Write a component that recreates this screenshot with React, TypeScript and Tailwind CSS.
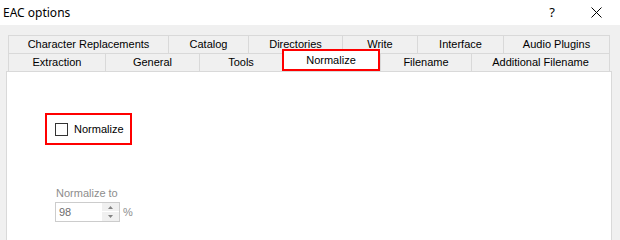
import React from "react";

const row1 = [
  { label: "Character Replacements", w: "w-[160px]" },
  { label: "Catalog", w: "w-[80px]" },
  { label: "Directories", w: "w-[94px]" },
  { label: "Write", w: "w-[75px]" },
  { label: "Interface", w: "w-[86px]" },
  { label: "Audio Plugins", w: "w-[107px]" },
];

const row2 = [
  { label: "Extraction", w: "w-[97px]" },
  { label: "General", w: "w-[94px]" },
  { label: "Tools", w: "w-[83px]" },
  { label: "Normalize", w: "w-[98px]", selected: true },
  { label: "Filename", w: "w-[91px]" },
  { label: "Additional Filename", w: "w-[139px]" },
];

function Tab({ label, w, last, selected }: { label: string; w: string; last?: boolean; selected?: boolean }) {
  if (selected) {
    return (
      <div
        className={`${w} h-[22px] -mt-[4px] relative z-10 flex items-center justify-center border-2 border-[#ff0000] bg-white text-black`}
      >
        {label}
      </div>
    );
  }
  return (
    <div
      className={`${w} h-[18px] flex items-center justify-center border-l border-t border-[#d9d9d9] ${last ? "border-r" : ""} bg-[#f0f0f0] text-black`}
    >
      {label}
    </div>
  );
}

export default function App() {
  return (
    <div
      className="w-[620px] h-[240px] overflow-hidden bg-[#f0f0f0] flex flex-col text-[11px] leading-[13px]"
      style={{ fontFamily: '"Liberation Sans", Arial, sans-serif' }}
    >
      <div className="h-[25px] bg-white flex items-center shrink-0">
        <span
          className="ml-[3px] text-[12px] text-black"
          style={{ fontFamily: '"Noto Sans", "Liberation Sans", sans-serif' }}
        >
          EAC options
        </span>
        <span
          className="ml-auto mr-[36px] text-[13px] text-black"
          style={{ fontFamily: '"Noto Sans", "Liberation Sans", sans-serif' }}
        >
          ?
        </span>
        <svg width="11" height="11" viewBox="0 0 11 11" className="mr-[18px]">
          <path d="M0.5 0.5 L10.5 10.5 M10.5 0.5 L0.5 10.5" stroke="#000" strokeWidth="1" fill="none" />
        </svg>
      </div>

      <div className="flex flex-col pt-[10px] shrink-0">
        <div className="ml-[8px] flex">
          {row1.map((t, i) => (
            <Tab key={t.label} label={t.label} w={t.w} last={i === row1.length - 1} />
          ))}
        </div>
        <div className="ml-[8px] flex">
          {row2.map((t, i) => (
            <Tab key={t.label} label={t.label} w={t.w} last={i === row2.length - 1} selected={t.selected} />
          ))}
        </div>

        <div className="ml-[6px] w-[606px] h-[190px] shrink-0 bg-white border border-[#d9d9d9] flex flex-col">
          <div className="mt-[41px] ml-[38px] w-[87px] h-[32px] border-2 border-[#ff0000] flex items-center pl-[8px]">
            <div className="w-[13px] h-[13px] border border-[#333333] bg-white" />
            <span className="ml-[6px] text-black">Normalize</span>
          </div>

          <div className="mt-[42px] ml-[49px] text-[#8d8d8d]">Normalize to</div>

          <div className="mt-[2px] ml-[48px] flex items-center">
            <div className="w-[65px] h-[20px] border border-[#cccccc] bg-white flex">
              <span className="flex-1 pl-[3px] flex items-center text-[#6d6d6d]">98</span>
              <div className="w-[17px] flex flex-col">
                <div className="h-[9px] bg-[#f0f0f0] border-b border-white flex items-center justify-center">
                  <svg width="5" height="3" viewBox="0 0 5 3">
                    <path d="M2.5 0 L5 3 L0 3 Z" fill="#838383" />
                  </svg>
                </div>
                <div className="h-[9px] bg-[#f0f0f0] flex items-center justify-center">
                  <svg width="5" height="3" viewBox="0 0 5 3">
                    <path d="M0 0 L5 0 L2.5 3 Z" fill="#838383" />
                  </svg>
                </div>
              </div>
            </div>
            <span className="ml-[3px] text-[#8d8d8d]">%</span>
          </div>
        </div>
      </div>
    </div>
  );
}
